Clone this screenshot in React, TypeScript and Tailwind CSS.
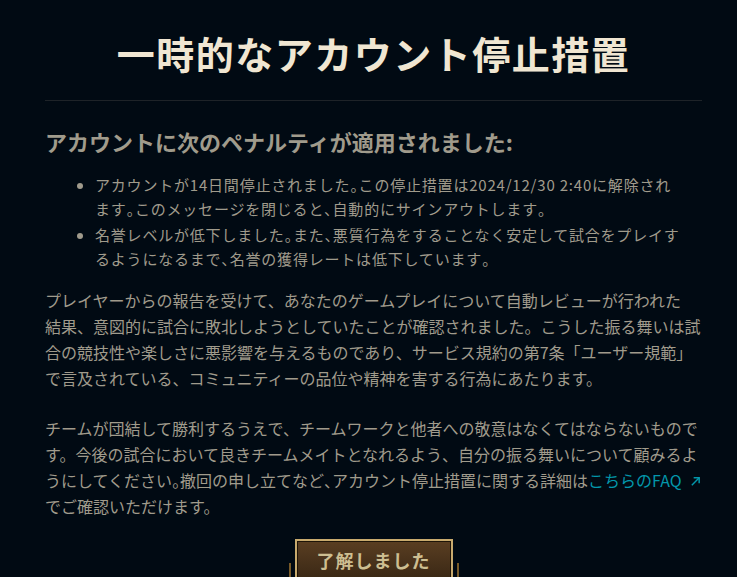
import * as React from "react";

const bullets = [
  ["アカウントが14日間停止されました。この停止措置は2024/12/30 2:40に解除され", "ます。このメッセージを閉じると、自動的にサインアウトします。"],
  ["名誉レベルが低下しました。また、悪質行為をすることなく安定して試合をプレイす", "るようになるまで、名誉の獲得レートは低下しています。"],
];

const para1 = [
  "プレイヤーからの報告を受けて、あなたのゲームプレイについて自動レビューが行われた",
  "結果、意図的に試合に敗北しようとしていたことが確認されました。こうした振る舞いは試",
  "合の競技性や楽しさに悪影響を与えるものであり、サービス規約の第7条「ユーザー規範」",
  "で言及されている、コミュニティーの品位や精神を害する行為にあたります。",
];

// narrow punctuation like the original font
const Punct = ({ c }: { c: string }) => <span className="[font-feature-settings:'palt']">{c}</span>;

function narrow(text: string) {
  return text.split(/([。、])/).map((part, i) =>
    part === "。" || part === "、" ? <Punct key={i} c={part} /> : <React.Fragment key={i}>{part}</React.Fragment>
  );
}

export default function App() {
  return (
    <div className="w-[737px] h-[577px] overflow-hidden bg-[#010a13] pl-[45px] pr-[35px] font-['Noto_Sans_CJK_JP',sans-serif]">
      {/* Title */}
      <div className="pt-[26px] pb-[20px] border-b border-[#1e2328] text-center">
        <h1 className="text-[38px] leading-[54px] font-bold text-[#f0e6d2] tracking-[1.5px]">
          一時的なアカウント停止措置
        </h1>
      </div>

      {/* Penalties */}
      <h2 className="mt-[24px] text-[22px] leading-[32px] font-bold text-[#a09b8c]">
        アカウントに次のペナルティが適用されました:
      </h2>
      <ul className="mt-[16px] pl-[50px] list-disc marker:text-[#a09b8c] text-[15px] leading-[24px] tracking-[0.8px] text-[#a09b8c] flex flex-col gap-[2px] whitespace-nowrap">
        {bullets.map((b, i) => (
          <li key={i}>
            {narrow(b[0])}
            <br />
            {narrow(b[1])}
          </li>
        ))}
      </ul>

      {/* Body */}
      <div className="mt-[16px] text-[16px] leading-[26px] text-[#a09b8c] flex flex-col gap-[24px] whitespace-nowrap">
        <p>
          {para1.map((l, i) => (
            <React.Fragment key={i}>
              {l}
              {i < para1.length - 1 && <br />}
            </React.Fragment>
          ))}
        </p>
        <p>
          チームが団結して勝利するうえで、チームワークと他者への敬意はなくてはならないもので
          <br />
          す。今後の試合において良きチームメイトとなれるよう、自分の振る舞いについて顧みるよ
          <br />
          うにしてください<Punct c="。" />撤回の申し立てなど<Punct c="、" />アカウント停止措置に関する詳細は
          <span className="text-[#0397ab]">
            こちらのFAQ
            <svg className="inline-block ml-[8px] -mt-[2px]" width="11" height="11" viewBox="0 0 12 12" fill="none" stroke="#0397ab" strokeWidth="1.6">
              <path d="M2 10 L10 2" />
              <path d="M4 2 H10 V8" />
            </svg>
          </span>
          <br />
          でご確認いただけます。
        </p>
      </div>

      {/* Button */}
      <div className="mt-[20px] flex justify-center">
        <div className="relative">
          <div className="absolute left-[-6px] top-[24px] w-[2px] h-[30px] bg-[#785a28]" />
          <div className="absolute right-[-6px] top-[24px] w-[2px] h-[30px] bg-[#785a28]" />
          <button className="w-[158px] h-[42px] border-2 border-[#c8aa6e] bg-gradient-to-b from-[#5a3e22] to-[#3a2815] shadow-[inset_0_0_0_1px_#1e1408] text-[18px] font-bold text-[#cdbe91] tracking-[1px]">
            了解しました
          </button>
        </div>
      </div>
    </div>
  );
}
